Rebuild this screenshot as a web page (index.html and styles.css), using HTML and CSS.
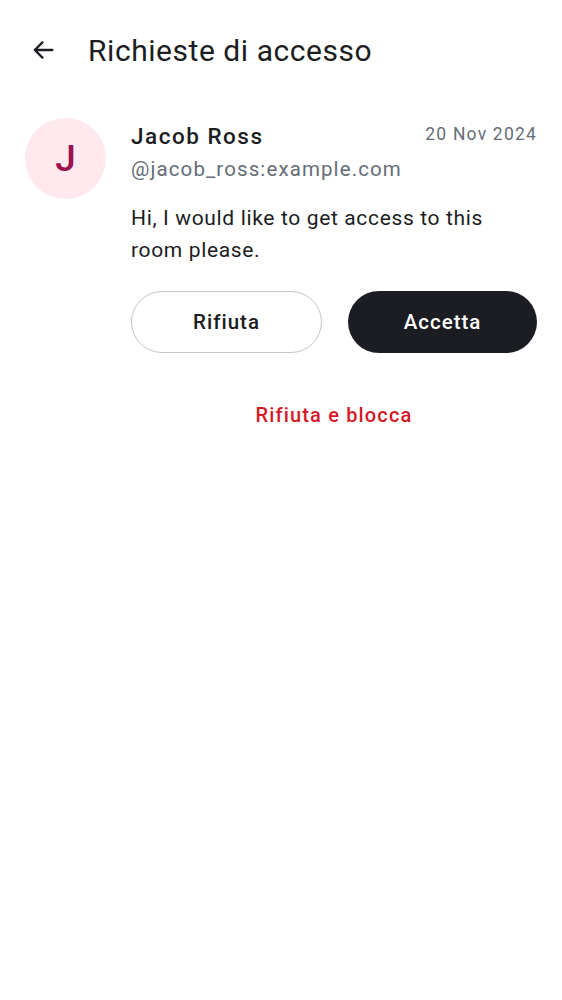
FILE: index.html
```html
<!DOCTYPE html>
<html lang="it">
<head>
<meta charset="utf-8">
<link rel="stylesheet" href="styles.css">
</head>
<body>
<header class="appbar">
  <button class="back" aria-label="Indietro">
    <svg width="28" height="28" viewBox="0 0 24 24"><path d="M20 12H5M11.5 5.5L5 12l6.5 6.5" fill="none" stroke="#1b1d22" stroke-width="2" stroke-linecap="round" stroke-linejoin="round"/></svg>
  </button>
  <h1 class="title">Richieste di accesso</h1>
</header>
<main class="request">
  <div class="avatar">J</div>
  <div class="body">
    <div class="head">
      <div class="name">Jacob Ross</div>
      <div class="date">20 Nov 2024</div>
    </div>
    <div class="handle">@jacob_ross:example.com</div>
    <p class="msg">Hi, I would like to get access to this room please.</p>
    <div class="actions">
      <button class="btn outline">Rifiuta</button>
      <button class="btn filled">Accetta</button>
    </div>
    <button class="danger">Rifiuta e blocca</button>
  </div>
</main>
</body>
</html>
```
FILE: styles.css
```css
html, body {
  margin: 0;
  padding: 0;
  background: #ffffff;
  font-family: Roboto, "Noto Sans", sans-serif;
  color: #1b1d22;
}
.appbar {
  display: flex;
  align-items: center;
  height: 100px;
  padding-left: 29px;
}
.back {
  border: 0;
  background: none;
  padding: 0;
  width: 28px;
  height: 28px;
  display: flex;
  margin-right: 31px;
}
.title {
  margin: 0;
  font-size: 30px;
  font-weight: 400;
  letter-spacing: 0.55px;
}
.request {
  display: flex;
  padding: 18px 25px 0 25px;
  gap: 25px;
}
.avatar {
  flex: none;
  width: 81px;
  height: 81px;
  border-radius: 50%;
  background: #ffe8ee;
  color: #9b1150;
  font-size: 37px;
  font-weight: 500;
  display: flex;
  align-items: center;
  justify-content: center;
}
.body {
  flex: 1;
  display: flex;
  flex-direction: column;
}
.head {
  display: flex;
  justify-content: space-between;
  align-items: flex-start;
  margin-top: 3px;
}
.name {
  font-size: 22.5px;
  font-weight: 500;
  line-height: 30px;
  letter-spacing: 1.5px;
}
.date {
  font-size: 17.5px;
  color: #656d77;
  line-height: 26px;
  letter-spacing: 1.2px;
}
.handle {
  font-size: 20.5px;
  color: #656d77;
  line-height: 32px;
  margin-top: 2px;
  letter-spacing: 1.1px;
}
.msg {
  margin: 17px 0 0 0;
  padding-right: 20px;
  font-size: 21px;
  line-height: 32px;
  letter-spacing: 0.65px;
}
.actions {
  display: flex;
  gap: 26px;
  margin-top: 25px;
}
.btn {
  flex: 1;
  height: 62px;
  border-radius: 31px;
  font-family: inherit;
  font-size: 20.5px;
  font-weight: 500;
  letter-spacing: 1px;
}
.outline {
  background: #ffffff;
  border: 1.5px solid #c0c5cd;
  color: #1b1d22;
}
.filled {
  background: #1b1d22;
  border: 0;
  color: #ffffff;
}
.danger {
  align-self: center;
  margin-top: 47px;
  border: 0;
  background: none;
  padding: 0;
  font-family: inherit;
  font-size: 20px;
  font-weight: 500;
  color: #d51928;
  line-height: 30px;
  letter-spacing: 1.15px;
}
```
